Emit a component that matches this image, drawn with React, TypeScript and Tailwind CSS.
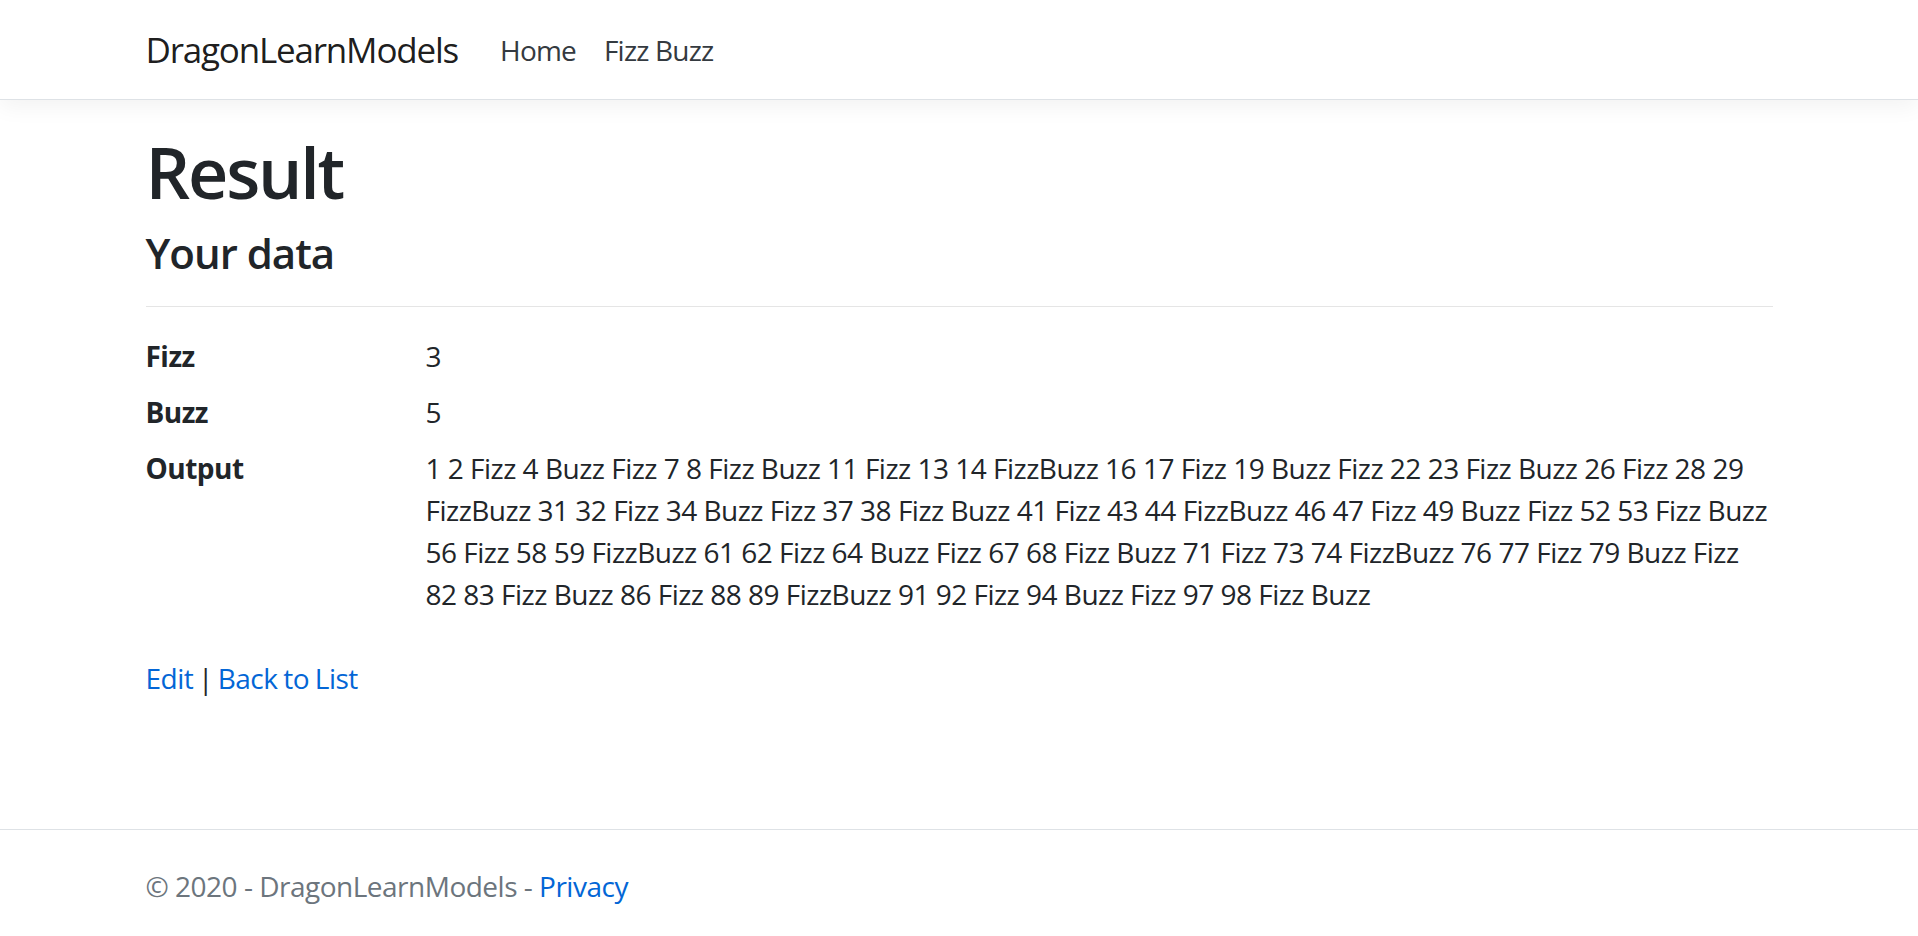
import React from "react";

const output = (() => {
  const parts: string[] = [];
  for (let i = 1; i <= 100; i++) {
    if (i % 15 === 0) parts.push("FizzBuzz");
    else if (i % 3 === 0) parts.push("Fizz");
    else if (i % 5 === 0) parts.push("Buzz");
    else parts.push(String(i));
  }
  return parts.join(" ");
})();

export default function App() {
  return (
    <div className="min-h-[936px] flex flex-col bg-white text-[#212529] font-['Open_Sans',sans-serif] text-[28px] leading-[42px]">
      <header>
        <nav className="h-[99.75px] bg-white border-b-[1.75px] border-[#dee2e6] shadow-[0_7px_21px_rgba(0,0,0,0.05)] mb-[30px]">
          <div className="mx-auto w-[1627px] h-full flex items-center pt-[2px]">
            <a className="text-[35px] leading-[52px] text-black/90 mr-[28px] tracking-[-1.2px]">DragonLearnModels</a>
            <a className="px-[14px] text-[#343a40] tracking-[-0.8px]">Home</a>
            <a className="px-[14px] text-[#343a40] tracking-[-0.8px]">Fizz Buzz</a>
          </div>
        </nav>
      </header>
      <main className="mx-auto w-[1627px] pb-[28px] tracking-[-0.5px]">
        <h1 className="text-[70px] leading-[84px] font-semibold mb-[14px] tracking-[-2.2px]">Result</h1>
        <h4 className="text-[42px] leading-[50px] font-semibold tracking-[-1px]">Your data</h4>
        <hr className="my-[28px] border-t-[1.75px] border-black/10" />
        <dl className="grid grid-cols-[280px_1fr] mb-[28px]">
          <dt className="font-bold">Fizz</dt>
          <dd className="mb-[14px]">3</dd>
          <dt className="font-bold">Buzz</dt>
          <dd className="mb-[14px]">5</dd>
          <dt className="font-bold">Output</dt>
          <dd className="mb-[14px]">{output}</dd>
        </dl>
        <div className="[word-spacing:-2px]">
          <a className="text-[#0366d6] [word-spacing:normal]">Edit</a> | <a className="text-[#0366d6] [word-spacing:-1px]">Back to List</a>
        </div>
      </main>
      <footer className="mt-auto h-[107px] border-t-[1.75px] border-[#dee2e6] text-[#6c757d] tracking-[-0.5px]">
        <div className="mx-auto w-[1627px] pt-[35px]">
          © 2020 - DragonLearnModels - <a className="text-[#0366d6]">Privacy</a>
        </div>
      </footer>
    </div>
  );
}
